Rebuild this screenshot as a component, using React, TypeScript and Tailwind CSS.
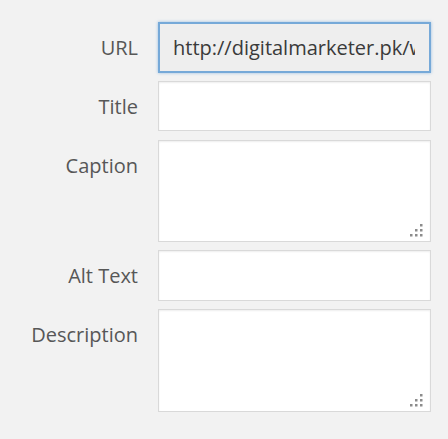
import type { ReactNode } from "react";

const labelCls = "text-right text-[20px] leading-[51px] text-[#575757]";

function Grip() {
  // the little dotted resize handle in the corner of a textarea
  const dots = [
    [10, 0],
    [5, 5],
    [10, 5],
    [0, 10],
    [5, 10],
    [10, 10],
  ];
  return (
    <svg
      width="13"
      height="13"
      viewBox="0 0 13 13"
      className="absolute right-[8px] bottom-[5px] pointer-events-none"
    >
      {dots.map(([x, y], i) => (
        <rect key={i} x={x} y={y} width="2.5" height="2.5" fill="#8c8c8c" />
      ))}
    </svg>
  );
}

function Row({ label, children }: { label: string; children: ReactNode }) {
  return (
    <>
      <div className={labelCls}>{label}</div>
      <div>{children}</div>
    </>
  );
}

export default function App() {
  const boxCls =
    "block w-full bg-white border border-[#d9d9d9] shadow-[inset_0_1px_2px_rgba(0,0,0,0.07)] outline-none";

  return (
    <main
      className="min-h-[439px] w-[448px] bg-[#f2f2f2] pt-[22px]"
      style={{ fontFamily: '"Open Sans", "Noto Sans", sans-serif' }}
    >
      <div className="grid grid-cols-[138px_273px] gap-x-[20px] gap-y-[8px]">
        <Row label="URL">
          <div className="h-[51px] bg-[#eeeeee] border-2 border-[#76a9d8] shadow-[0_0_3px_rgba(91,157,217,0.6)] flex items-center pl-[13px] pr-[14px]">
            <div className="overflow-hidden flex-1">
              <span className="block whitespace-nowrap text-[20px] text-[#3a3a3a]">
                http://digitalmarketer.pk/wp-content/uploads
              </span>
            </div>
          </div>
        </Row>

        <Row label="Title">
          <input type="text" className={boxCls + " h-[50px]"} />
        </Row>

        <Row label="Caption">
          <div className="relative">
            <textarea className={boxCls + " h-[102px] resize-none"} />
            <Grip />
          </div>
        </Row>

        <Row label="Alt Text">
          <input type="text" className={boxCls + " h-[51px]"} />
        </Row>

        <Row label="Description">
          <div className="relative">
            <textarea className={boxCls + " h-[103px] resize-none"} />
            <Grip />
          </div>
        </Row>
      </div>
    </main>
  );
}
